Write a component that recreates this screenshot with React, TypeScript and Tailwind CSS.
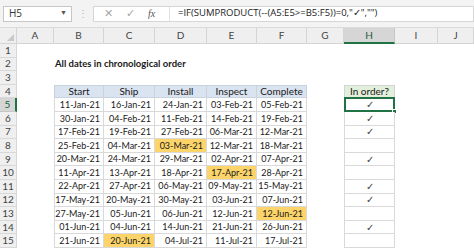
import React from "react";

const colLetters = ["A", "B", "C", "D", "E", "F", "G", "H", "I", "J"];

type Cell = { v: string; y?: boolean };
const data: Cell[][] = [
  [{ v: "11-Jan-21" }, { v: "16-Jan-21" }, { v: "24-Jan-21" }, { v: "03-Feb-21" }, { v: "05-Feb-21" }],
  [{ v: "30-Jan-21" }, { v: "04-Feb-21" }, { v: "11-Feb-21" }, { v: "14-Feb-21" }, { v: "19-Feb-21" }],
  [{ v: "17-Feb-21" }, { v: "19-Feb-21" }, { v: "27-Feb-21" }, { v: "06-Mar-21" }, { v: "12-Mar-21" }],
  [{ v: "25-Feb-21" }, { v: "04-Mar-21" }, { v: "03-Mar-21", y: true }, { v: "12-Mar-21" }, { v: "18-Mar-21" }],
  [{ v: "20-Mar-21" }, { v: "24-Mar-21" }, { v: "29-Mar-21" }, { v: "02-Apr-21" }, { v: "07-Apr-21" }],
  [{ v: "11-Apr-21" }, { v: "13-Apr-21" }, { v: "18-Apr-21" }, { v: "17-Apr-21", y: true }, { v: "28-Apr-21" }],
  [{ v: "22-Apr-21" }, { v: "27-Apr-21" }, { v: "06-May-21" }, { v: "09-May-21" }, { v: "15-May-21" }],
  [{ v: "17-May-21" }, { v: "20-May-21" }, { v: "30-May-21" }, { v: "03-Jun-21" }, { v: "07-Jun-21" }],
  [{ v: "27-May-21" }, { v: "05-Jun-21" }, { v: "06-Jun-21" }, { v: "12-Jun-21" }, { v: "12-Jun-21", y: true }],
  [{ v: "01-Jun-21" }, { v: "04-Jun-21" }, { v: "14-Jun-21" }, { v: "21-Jun-21" }, { v: "26-Jun-21" }],
  [{ v: "21-Jun-21" }, { v: "20-Jun-21", y: true }, { v: "04-Jul-21" }, { v: "11-Jul-21" }, { v: "17-Jul-21" }],
];
const checks = [true, true, true, false, true, false, true, true, false, true, false];
const headers = ["Start", "Ship", "Install", "Inspect", "Complete"];

function SheetCell({ r, c }: { r: number; c: number }) {
  const base = "relative flex items-center overflow-visible whitespace-nowrap text-[#1a1a1a]";
  if (r === 2 && c === 1) {
    return <div className={base + " pl-[1px] text-[9.5px] font-bold"}>All dates in chronological order</div>;
  }
  if (r >= 4 && c >= 1 && c <= 5) {
    const top = r === 4 ? " border-t" : "";
    const left = c === 1 ? " border-l" : "";
    if (r === 4) {
      return (
        <div className={base + " justify-center text-[10px] bg-[#dae3f0] border-r border-b border-[#c9d3e0]" + top + left}>
          {headers[c - 1]}
        </div>
      );
    }
    const cell = data[r - 5][c - 1];
    return (
      <div
        className={
          base +
          " justify-end pr-[3px] text-[9px] border-r border-b border-[#d9d9d9]" +
          (cell.y ? " bg-[#fcd46a]" : " bg-white") +
          left
        }
      >
        {cell.v}
      </div>
    );
  }
  if (r >= 4 && c === 7) {
    if (r === 4) {
      return <div className={base + " justify-center text-[10px] bg-[#e2efda] border border-[#d4d4d4]"}>In order?</div>;
    }
    const ok = checks[r - 5];
    return (
      <div className={base + " justify-center border-x border-b border-[#d9d9d9] bg-white"}>
        {ok ? <span className="text-[10px] text-[#444]">✓</span> : null}
        {r === 5 ? (
          <>
            <div className="absolute -left-[1px] -top-[1px] -right-[1px] -bottom-[1px] border-2 border-[#217346]" />
            <div className="absolute -right-[3px] -bottom-[3px] h-[5px] w-[5px] bg-[#217346] border border-white" />
          </>
        ) : null}
      </div>
    );
  }
  return <div className={base} />;
}

export default function App() {
  const rows = Array.from({ length: 15 }, (_, i) => i + 1);
  return (
    <div
      className="w-[474px] h-[248px] overflow-hidden bg-white flex flex-col"
      style={{ fontFamily: "Lato, 'Open Sans', sans-serif" }}
    >
      {/* Formula bar */}
      <div className="h-[28px] shrink-0 bg-[#f3f3f3] flex items-center pl-[3px] border-b border-[#dadada]">
        <div
          className="h-[16px] w-[69px] bg-white border border-[#c6c6c6] flex items-center justify-between pl-[5px] pr-[4px] text-[10px] text-[#333]"
          style={{ fontFamily: "'Open Sans', sans-serif" }}
        >
          <span>H5</span>
          <span className="text-[7px] text-[#555]">▼</span>
        </div>
        <div className="w-[21px] flex justify-center text-[10px] text-[#b5b5b5]">⋮</div>
        <div className="h-[16px] flex-1 bg-white border border-[#d6d6d6] flex items-center">
          <div className="w-[76px] h-full flex items-center border-r border-[#e2e2e2]">
            <span className="ml-[10px] text-[11px] text-[#a6a6a6]">✕</span>
            <span className="ml-[13px] text-[11px] text-[#a6a6a6]">✓</span>
            <span className="ml-[13px] text-[10px] italic text-[#555]" style={{ fontFamily: "'Liberation Serif', serif" }}>
              fx
            </span>
          </div>
          <span className="ml-[8px] text-[9.5px] text-[#222] whitespace-nowrap" style={{ fontFamily: "'Open Sans', sans-serif" }}>
            =IF(SUMPRODUCT(--(A5:E5&gt;=B5:F5))=0,"✓","")
          </span>
        </div>
      </div>
      {/* Sheet */}
      <div className="grid grid-cols-[17px_37px_50px_51px_52px_50px_50px_37px_51px_43px_1fr] grid-rows-[16px_repeat(15,13.6px)]">
        <div className="relative bg-[#efefef] border-r border-b border-[#d4d4d4]">
          <div className="absolute right-[2px] bottom-[2px] w-0 h-0 border-l-[7px] border-l-transparent border-b-[7px] border-b-[#c8c8c8]" />
        </div>
        {colLetters.map((l) =>
          l === "H" ? (
            <div
              key={l}
              className="flex items-center justify-center bg-[#d6d6d6] border-r border-[#c6c6c6] border-b-2 border-b-[#217346] text-[10px] text-[#215c3a]"
            >
              {l}
            </div>
          ) : (
            <div key={l} className="flex items-center justify-center bg-[#efefef] border-r border-b border-[#d4d4d4] text-[10px] text-[#444]">
              {l}
            </div>
          )
        )}
        {rows.map((r) => (
          <React.Fragment key={r}>
            {r === 5 ? (
              <div className="flex items-center justify-center bg-[#d6d6d6] border-r-2 border-r-[#217346] border-b border-[#c6c6c6] text-[10px] text-[#215c3a]">
                {r}
              </div>
            ) : (
              <div className="flex items-center justify-center bg-[#efefef] border-r border-b border-[#d8d8d8] text-[10px] text-[#444]">
                {r}
              </div>
            )}
            {colLetters.map((_, c) => (
              <SheetCell key={c} r={r} c={c} />
            ))}
          </React.Fragment>
        ))}
      </div>
    </div>
  );
}
